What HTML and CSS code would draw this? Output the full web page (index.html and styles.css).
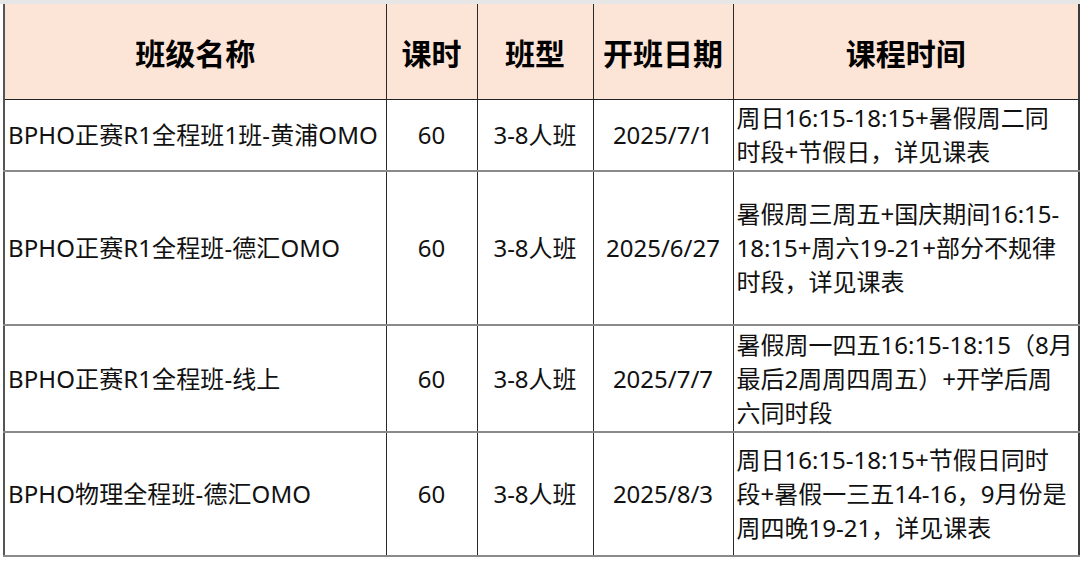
FILE: index.html
```html
<!DOCTYPE html>
<html lang="zh-CN">
<head>
<meta charset="utf-8">
<link rel="stylesheet" href="styles.css">
</head>
<body>
<div class="strip"></div>
<table class="sheet">
  <colgroup>
    <col class="c-name"><col class="c-hours"><col class="c-type"><col class="c-date"><col class="c-time">
  </colgroup>
  <thead>
    <tr class="head">
      <th>班级名称</th><th>课时</th><th>班型</th><th>开班日期</th><th>课程时间</th>
    </tr>
  </thead>
  <tbody>
    <tr class="r1">
      <td class="name">BPHO正赛R1全程班1班-黄浦OMO</td><td>60</td><td>3-8人班</td><td>2025/7/1</td>
      <td class="time">周日16:15-18:15+暑假周二同<br>时段+节假日，详见课表</td>
    </tr>
    <tr class="r2">
      <td class="name">BPHO正赛R1全程班-德汇OMO</td><td>60</td><td>3-8人班</td><td>2025/6/27</td>
      <td class="time">暑假周三周五+国庆期间16:15-<br>18:15+周六19-21+部分不规律<br>时段，详见课表</td>
    </tr>
    <tr class="r3">
      <td class="name">BPHO正赛R1全程班-线上</td><td>60</td><td>3-8人班</td><td>2025/7/7</td>
      <td class="time">暑假周一四五16:15-18:15（8月<br>最后2周周四周五）+开学后周<br>六同时段</td>
    </tr>
    <tr class="r4">
      <td class="name">BPHO物理全程班-德汇OMO</td><td>60</td><td>3-8人班</td><td>2025/8/3</td>
      <td class="time">周日16:15-18:15+节假日同时<br>段+暑假一三五14-16，9月份是<br>周四晚19-21，详见课表</td>
    </tr>
  </tbody>
</table>
</body>
</html>
```

FILE: styles.css
```css
html, body {
  margin: 0;
  padding: 0;
  background: #ffffff;
}
body {
  width: 1080px;
  height: 561px;
  overflow: hidden;
  font-family: "Noto Sans", "Noto Sans CJK SC", sans-serif;
  color: #111;
}
.strip {
  height: 4px;
  background: #e6e6e6;
}
.sheet {
  margin-left: 3px;
  border-collapse: collapse;
  table-layout: fixed;
  width: 1075px;
}
.c-name { width: 382px; }
.c-hours { width: 91px; }
.c-type { width: 116px; }
.c-date { width: 140px; }
.c-time { width: 346px; }

.sheet th, .sheet td {
  border-left: 1px solid #2a2a2a;
  border-right: 1px solid #2a2a2a;
  padding: 0;
  vertical-align: middle;
  text-align: center;
  white-space: nowrap;
}
.sheet th:first-child, .sheet td:first-child {
  border-left: 2px solid #555;
}
.sheet th:last-child, .sheet td:last-child {
  border-right: 2px solid #3a3a3a;
}
.head th {
  background: #fce4d6;
  font-size: 30px;
  font-weight: bold;
  height: 95px;
  border-bottom: 1px solid #222;
  color: #000;
}
.sheet td {
  font-size: 24px;
  line-height: 34px;
  border-bottom: 2px solid #8a8a8a;
}
.sheet td.name {
  text-align: left;
  padding-left: 3px;
  letter-spacing: 0.1px;
}
.sheet td.time {
  text-align: left;
  padding-left: 3px;
}
.r1 td { height: 70px; }
.r2 td { height: 152px; }
.r3 td { height: 105px; }
.r4 td { height: 122px; }
```
